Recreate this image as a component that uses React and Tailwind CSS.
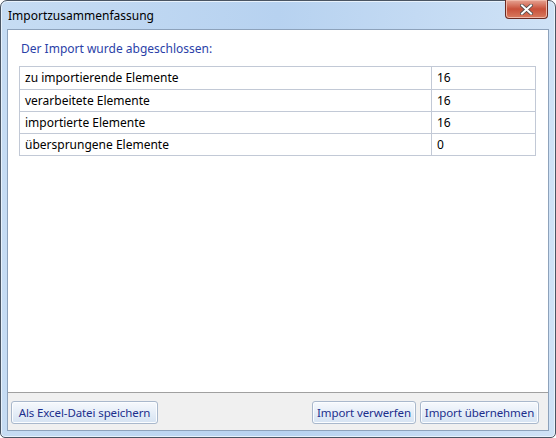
import React from 'react';

const rows = [
    ['zu importierende Elemente', '16'],
    ['verarbeitete Elemente', '16'],
    ['importierte Elemente', '16'],
    ['übersprungene Elemente', '0'],
];

const Button = ({ children, className }) => (
    <button
        className={`h-[23px] rounded-[3px] border border-[#a9b8cc] bg-gradient-to-b from-[#f6f9fd] via-[#e6eef8] to-[#d6e3f2] text-[11.5px] tracking-[-0.1px] text-[#1c2f8c] shadow-[inset_0_0_0_1px_#fbfdff] whitespace-nowrap ${className}`}
    >
        {children}
    </button>
);

const App = () => {
    return (
        <div className="w-[556px] h-[438px] bg-white font-['Noto_Sans',sans-serif]">
            <div className="w-full h-full rounded-t-[7px] rounded-b-[5px] border border-[#4a5563] bg-gradient-to-r from-[#c6dcf3] via-[#b7d2f0] to-[#cfe2f6] flex flex-col shadow-[inset_0_0_0_1px_#e8f2fc]">
                {/* title bar */}
                <div className="h-[28px] flex items-start justify-between pl-[7px] pr-[7px]">
                    <span className="mt-[6px] text-[12px] text-black">Importzusammenfassung</span>
                    <div className="w-[43px] h-[19px] mt-[-1px] rounded-b-[4px] border border-[#6a2a22] border-t-0 bg-gradient-to-b from-[#e5a393] via-[#c8503a] to-[#d87a5f] flex items-center justify-center shadow-[inset_0_0_0_1px_#f0b8a8]">
                        <svg width="13" height="11" viewBox="0 0 13 11">
                            <path d="M2 1.5 L11 9.5 M11 1.5 L2 9.5" stroke="#4a4a4a" strokeWidth="3.6" strokeLinecap="square" />
                            <path d="M2 1.5 L11 9.5 M11 1.5 L2 9.5" stroke="#ffffff" strokeWidth="2" strokeLinecap="square" />
                        </svg>
                    </div>
                </div>
                {/* client area */}
                <div className="flex-1 mx-[6px] mb-[6px] border border-[#8da2bb] bg-white flex flex-col">
                    <div className="flex-1 pt-[10px] pl-[11px] pr-[12px]">
                        <p className="text-[12px] text-[#2b3fa8] leading-[18px] ml-[2px]">Der Import wurde abgeschlossen:</p>
                        <div className="mt-[8px] border border-[#c2c9d6]">
                            {rows.map(([label, value], i) => (
                                <div key={i} className={`flex h-[22px] text-[12px] text-black ${i > 0 ? 'border-t border-[#c2c9d6]' : ''}`}>
                                    <div className="w-[412px] pl-[5px] flex items-center border-r border-[#c2c9d6]">{label}</div>
                                    <div className="flex-1 pl-[5px] flex items-center">{value}</div>
                                </div>
                            ))}
                        </div>
                    </div>
                    <div className="h-[38px] border-t border-[#a0a0a0] bg-[#f0f0f0] flex items-start pt-[8px] pl-[3px] pr-[9px]">
                        <Button className="w-[147px]">Als Excel-Datei speichern</Button>
                        <div className="flex-1" />
                        <Button className="w-[104px]">Import verwerfen</Button>
                        <Button className="w-[119px] ml-[4px]">Import übernehmen</Button>
                    </div>
                </div>
            </div>
        </div>
    );
};

export default App;
